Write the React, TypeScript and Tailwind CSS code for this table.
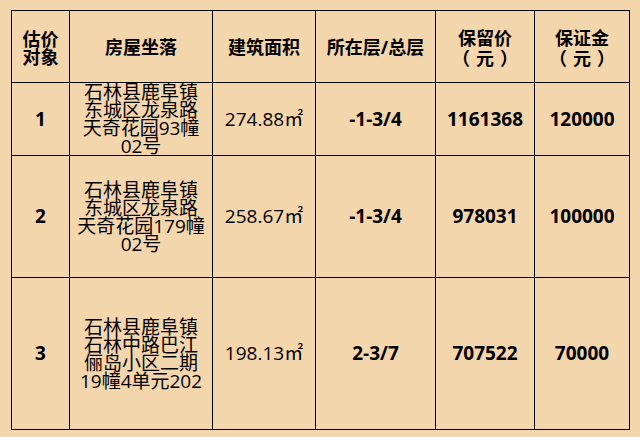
import React from "react";

const cjk = { fontFamily: '"Open Sans", "Noto Sans CJK SC", sans-serif' };

function Cell({ children, bold = false, className = "" }: { children: React.ReactNode; bold?: boolean; className?: string }) {
  return (
    <div
      className={`bg-[#f4d6ad] flex items-center justify-center text-center text-black ${bold ? "font-bold" : ""} ${className}`}
      style={cjk}
    >
      {children}
    </div>
  );
}

function Yuan() {
  return (
    <div className="[text-spacing-trim:space-all] flex justify-center" style={{ fontFamily: '"Noto Sans CJK SC", sans-serif' }}>
      <span>（</span>
      <span className="mx-[6px]">元</span>
      <span>）</span>
    </div>
  );
}

const rows = [
  { id: "1", addr: ["石林县鹿阜镇", "东城区龙泉路", "天奇花园93幢", "02号"], area: "274.88", floor: "-1-3/4", price: "1161368", dep: "120000" },
  { id: "2", addr: ["石林县鹿阜镇", "东城区龙泉路", "天奇花园179幢", "02号"], area: "258.67", floor: "-1-3/4", price: "978031", dep: "100000" },
  { id: "3", addr: ["石林县鹿阜镇", "石林中路巴江", "俪岛小区二期", "19幢4单元202"], area: "198.13", floor: "2-3/7", price: "707522", dep: "70000" },
];

export default function App() {
  return (
    <div className="w-[640px] h-[437px] bg-[#f4d6ad] pt-[10px] pl-[11px]">
      <div className="w-[619px] bg-black p-px grid gap-px grid-cols-[57px_142px_102px_119px_98px_94px] grid-rows-[71px_72px_121px_151px]">
        <Cell bold className="text-[18px] leading-[18px] pt-[2px]">估价<br />对象</Cell>
        <Cell bold className="text-[18px] leading-[18px]">房屋坐落</Cell>
        <Cell bold className="text-[18px] leading-[18px]">建筑面积</Cell>
        <Cell bold className="text-[18px] leading-[18px]">所在层/总层</Cell>
        <Cell bold className="text-[18px] leading-[19px] pt-[2px]">
          <div>
            <div>保留价</div>
            <Yuan />
          </div>
        </Cell>
        <Cell bold className="text-[18px] leading-[19px] pt-[2px]">
          <div>
            <div>保证金</div>
            <Yuan />
          </div>
        </Cell>
        {rows.map((r) => (
          <React.Fragment key={r.id}>
            <Cell bold className="text-[19px]">{r.id}</Cell>
            <Cell className="text-[19px] leading-[18px] whitespace-nowrap">
              <div>
                {r.addr.map((l, i) => (
                  <div key={i}>{l}</div>
                ))}
              </div>
            </Cell>
            <Cell className="text-[19px]">{r.area}㎡</Cell>
            <Cell bold className="text-[19px]">{r.floor}</Cell>
            <Cell bold className="text-[19px]">{r.price}</Cell>
            <Cell bold className="text-[19px]">{r.dep}</Cell>
          </React.Fragment>
        ))}
      </div>
    </div>
  );
}
